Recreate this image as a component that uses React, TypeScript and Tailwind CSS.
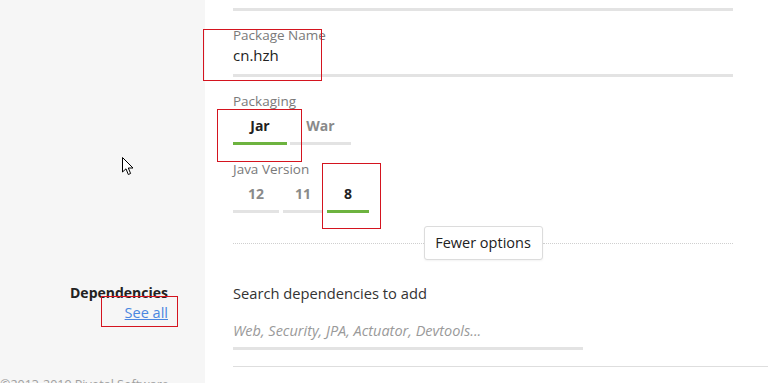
const packaging = [
  { label: "Jar", width: "w-[54px]", active: true },
  { label: "War", width: "w-[61px]", active: false },
];

const javaVersions = [
  { label: "12", width: "w-[46px]", active: false },
  { label: "11", width: "w-[40px]", active: false },
  { label: "8", width: "w-[42px]", active: true },
];

function Tab({ label, width, active }: { label: string; width: string; active: boolean }) {
  return (
    <div className={`${width} flex flex-col items-center`}>
      <span className={`text-[14px] leading-[20px] font-bold ${active ? "text-[#222]" : "text-[#8a8a8a]"}`}>{label}</span>
      <div className={`mt-[6px] h-[3px] w-full ${active ? "bg-[#6db33f]" : "bg-[#e3e3e3]"}`} />
    </div>
  );
}

function Underline({ className = "" }: { className?: string }) {
  return <div className={`h-[3px] bg-[#e3e3e3] ${className}`} />;
}

export default function App() {
  return (
    <div className="relative h-[383px] w-[768px] overflow-hidden bg-white font-['Open_Sans',sans-serif]">
      <div className="grid grid-cols-[205px_1fr]">
        {/* project options */}
        <div className="bg-[#f6f6f6]" />
        <div className="pl-[28px] pr-[35px] pt-[8px]">
          <Underline />

          <div className="mt-[16px] text-[13.5px] leading-[16px] text-[#7a7a7a]">Package Name</div>
          <div className="mt-[2px] text-[15px] leading-[20px] text-[#222]">cn.hzh</div>
          <Underline className="mt-[9px]" />

          <div className="mt-[16px] text-[13.5px] leading-[16px] text-[#7a7a7a]">Packaging</div>
          <div className="mt-[7px] flex gap-[3px]">
            {packaging.map((p) => (
              <Tab key={p.label} {...p} />
            ))}
          </div>

          <div className="mt-[16px] text-[13.5px] leading-[16px] text-[#7a7a7a]">Java Version</div>
          <div className="mt-[7px] flex gap-[4px]">
            {javaVersions.map((v) => (
              <Tab key={v.label} {...v} />
            ))}
          </div>

          <div className="mt-[13px] flex items-center">
            <div className="flex-1 border-t border-dotted border-[#cfcfcf]" />
            <button className="h-[34px] w-[119px] rounded-[3px] border border-[#dcdcdc] bg-white text-[14.5px] text-[#222] shadow-[0_1px_2px_rgba(0,0,0,0.05)]">
              Fewer options
            </button>
            <div className="flex-1 border-t border-dotted border-[#cfcfcf]" />
          </div>
        </div>

        {/* dependencies */}
        <div className="flex flex-col items-end bg-[#f6f6f6] pr-[37px] pt-[23px]">
          <span className="text-[14px] leading-[20px] font-bold text-[#222]">Dependencies</span>
          <a href="#" className="text-[14.5px] leading-[20px] text-[#4a86e0] underline">See all</a>
        </div>
        <div className="pl-[28px] pt-[23px]">
          <div className="text-[14.7px] leading-[20px] text-[#333]">Search dependencies to add</div>
          <div className="mt-[18px] text-[14.5px] leading-[20px] italic text-[#9a9a9a]">
            Web, Security, JPA, Actuator, Devtools...
          </div>
          <Underline className="mt-[6px] w-[350px]" />
          <div className="mt-[16px] border-t border-[#dedede]" />
        </div>

        {/* footer */}
        <div className="h-[20px] bg-[#f6f6f6] pt-[10px] text-[12.5px] leading-[16px] text-[#a0a0a0]">
          ©2013-2019 Pivotal Software
        </div>
        <div />
      </div>

      {/* annotation boxes */}
      <div className="pointer-events-none absolute left-[203px] top-[29px] h-[52px] w-[119px] border border-[#d4141f]" />
      <div className="pointer-events-none absolute left-[217px] top-[109px] h-[53px] w-[85px] border border-[#d4141f]" />
      <div className="pointer-events-none absolute left-[322px] top-[163px] h-[66px] w-[59px] border border-[#d4141f]" />
      <div className="pointer-events-none absolute left-[101px] top-[296px] h-[31px] w-[77px] border border-[#d4141f]" />

      {/* mouse cursor */}
      <svg className="absolute left-[122px] top-[157px]" width="13" height="20" viewBox="0 0 13 20">
        <path d="M0.5 0.5 L0.5 15 L4 11.8 L6.3 17.5 L8.6 16.5 L6.3 11 L11 11 Z" fill="#fff" stroke="#000" strokeWidth="1" strokeLinejoin="round" />
      </svg>
    </div>
  );
}
